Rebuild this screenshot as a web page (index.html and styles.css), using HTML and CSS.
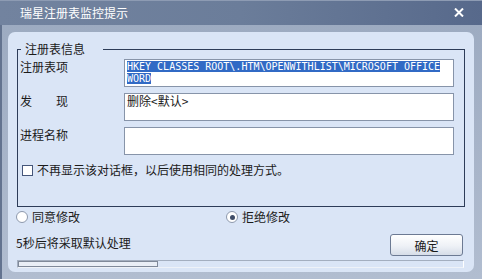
FILE: index.html
```html
<!DOCTYPE html>
<html>
<head>
    <meta charset="utf-8">
    <link rel="stylesheet" href="styles.css">
</head>
<body>
    <div class="window">
        <div class="titlebar">
            <span class="title">瑞星注册表监控提示</span>
            <svg class="close" width="10" height="9" viewBox="0 0 10 9"><path d="M1 0.5 L9 8.5 M9 0.5 L1 8.5" stroke="#fff" stroke-width="2"/></svg>
        </div>
        <div class="frame">
            <div class="panel">
                <fieldset class="group">
                    <legend>注册表信息</legend>
                    <div class="row first">
                        <span class="label">注册表项</span>
                        <div class="field mono"><span class="selected">HKEY_CLASSES_ROOT\.HTM\OPENWITHLIST\MICROSOFT OFFICE WORD</span></div>
                    </div>
                    <div class="row">
                        <span class="label spaced">发 现</span>
                        <div class="field">删除&lt;默认&gt;</div>
                    </div>
                    <div class="row">
                        <span class="label">进程名称</span>
                        <div class="field"></div>
                    </div>
                    <div class="check-row">
                        <span class="checkbox"></span>
                        <span>不再显示该对话框，以后使用相同的处理方式。</span>
                    </div>
                </fieldset>
                <div class="choices">
                    <div class="option first">
                        <span class="radio"></span>
                        <span>同意修改</span>
                    </div>
                    <div class="option">
                        <span class="radio checked"></span>
                        <span>拒绝修改</span>
                    </div>
                </div>
                <div class="footer">
                    <div class="footer-row">
                        <span class="countdown">5秒后将采取默认处理</span>
                        <button class="ok-button">确定</button>
                    </div>
                    <div class="progress"><div class="progress-fill"></div></div>
                </div>
            </div>
        </div>
    </div>
</body>
</html>
```

FILE: styles.css
```css
body {
    margin: 0;
    font-family: "Noto Sans CJK SC", sans-serif;
    font-size: 12px;
    color: #1a1a1a;
}
.window {
    width: 482px;
    height: 279px;
    display: flex;
    flex-direction: column;
    background: #a6b3c8;
}
.titlebar {
    height: 25px;
    box-sizing: border-box;
    display: flex;
    align-items: center;
    justify-content: space-between;
    padding: 0 18px 1px 20px;
    background: linear-gradient(to right, #72839f, #6b7d9a 50%, #57698b);
    border-top: 1px solid #8d9bb3;
    color: #fff;
}
.title {
    line-height: 16px;
}
.frame {
    flex: 1;
    padding: 7px 8px 7px 6px;
    border-left: 2px solid #63738f;
    background: linear-gradient(#9dabc1, #b1bdd0);
}
.panel {
    height: 240px;
    box-sizing: border-box;
    background: #dae5f6;
    border-radius: 7px;
    padding: 9px 8px 4px 8px;
}
.group {
    margin: 0 1px;
    padding: 0 0 28px 2px;
    border: 1px solid #2d3c58;
    min-width: 0;
}
.group legend {
    margin-left: 1px;
    padding: 0 18px 0 4px;
    line-height: 16px;
}
.row {
    display: flex;
    align-items: flex-start;
    margin-top: 6px;
}
.row.first {
    margin-top: 2px;
}
.label {
    width: 104px;
    line-height: 16px;
}
.label.spaced {
    width: 48px;
    margin-right: 56px;
    text-align-last: justify;
}
.field {
    width: 330px;
    height: 28px;
    box-sizing: border-box;
    background: #fff;
    border: 1px solid #8794a9;
    padding: 1px 2px;
    line-height: 12px;
}
.mono {
    font-family: "DejaVu Sans Mono", monospace;
    font-size: 10px;
}
.selected {
    background: #316ac5;
    color: #fff;
}
.check-row {
    display: flex;
    align-items: center;
    margin-top: 7px;
    line-height: 16px;
}
.checkbox {
    width: 11px;
    height: 11px;
    box-sizing: border-box;
    margin: 0 4px 0 2px;
    background: #fff;
    border: 1px solid #45567a;
}
.choices {
    display: flex;
    margin-top: 2px;
    line-height: 16px;
}
.option {
    display: flex;
    align-items: center;
}
.option.first {
    width: 210px;
}
.radio {
    width: 12px;
    height: 12px;
    box-sizing: border-box;
    margin-right: 4px;
    border-radius: 50%;
    background: #fff;
    border: 1px solid #8d99ad;
    display: flex;
    align-items: center;
    justify-content: center;
}
.radio.checked::after {
    content: "";
    width: 5px;
    height: 5px;
    border-radius: 50%;
    background: #3f4d68;
}
.footer {
    margin-top: 9px;
}
.footer-row {
    display: flex;
    justify-content: space-between;
    height: 22px;
}
.countdown {
    padding-top: 1px;
    line-height: 16px;
}
.ok-button {
    width: 73px;
    height: 22px;
    margin-right: 3px;
    padding: 0;
    font-family: "Noto Sans CJK SC", sans-serif;
    font-size: 12px;
    color: #1a1a1a;
    border: 1px solid #6c7a93;
    border-radius: 3px;
    background: linear-gradient(#ffffff, #eef1f6 55%, #d6dde8);
}
.progress {
    height: 8px;
    box-sizing: border-box;
    margin: 4px 2px 0 1px;
    border-top: 1px solid #a3aebf;
    border-left: 1px solid #a3aebf;
    border-right: 1px solid #fff;
    border-bottom: 1px solid #eef2f8;
}
.progress-fill {
    width: 140px;
    height: 100%;
    box-sizing: border-box;
    border: 1px solid #7f8999;
    background: #e9eef6;
}
```
